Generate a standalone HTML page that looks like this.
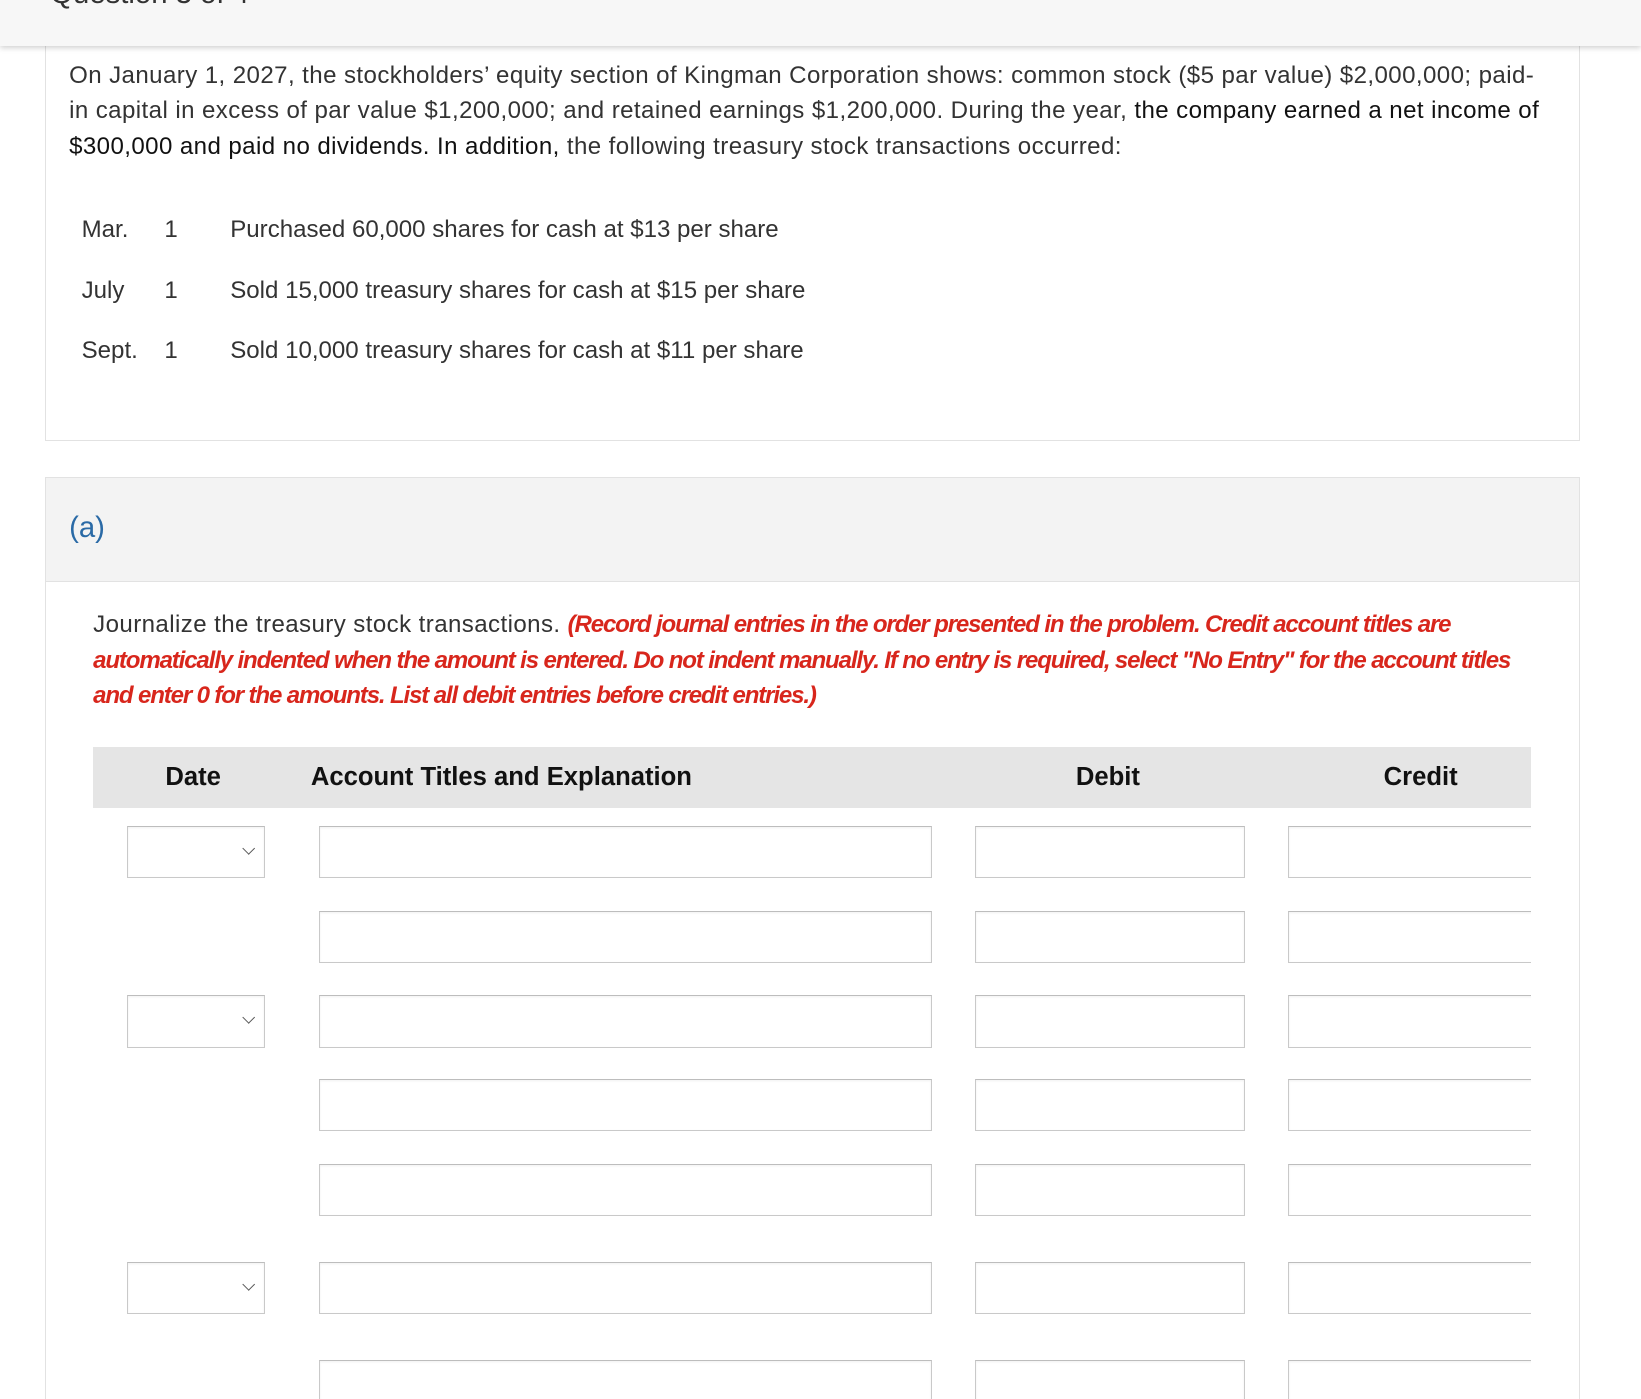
<!DOCTYPE html>
<html><head><meta charset="utf-8"><style>
html,body{margin:0;padding:0;background:#fff;overflow:hidden}
body{width:1641px;height:1399px}
#w{zoom:1.0466;position:relative;width:1568px;height:1337px;font-family:"Liberation Sans",sans-serif;color:#333}
.abs{position:absolute;white-space:nowrap}
.top{position:absolute;left:0;top:0;width:1568px;height:44px;background:#f7f7f7;box-shadow:0 2px 5px rgba(0,0,0,.18);overflow:hidden;z-index:2}
.card1{position:absolute;left:43px;top:44px;width:1465px;height:376px;border:1px solid #e2e2e2;border-top:none;background:#fff}
.card2{position:absolute;left:43px;top:456px;width:1465px;height:900px;border:1px solid #e2e2e2;background:#fff}
.band{position:absolute;left:0;top:0;width:1465px;height:98px;background:#f3f3f3;border-bottom:1px solid #e2e2e2}
.p{font-size:23px;line-height:34px;color:#333}
.sp{letter-spacing:0.4px}
.red{color:#d8261c;font-style:italic;font-weight:bold;letter-spacing:-1.1px}
.th{position:absolute;left:89px;top:714px;width:1374px;height:58px;background:#e5e5e5}
.th span{position:absolute;top:15px;font-size:24.5px;font-weight:bold;color:#111}
.in{position:absolute;height:48px;border:1px solid #c9c9c9;border-top-color:#bdbdbd;background:#fff;box-shadow:inset 0 1px 2px rgba(0,0,0,.06)}
.sel::after{content:"";position:absolute;right:10px;top:16px;width:8px;height:8px;border-right:1.5px solid #555;border-bottom:1.5px solid #555;transform:rotate(45deg)}
</style></head><body><div id="w">
<div class="top"><div class="abs" style="left:48px;top:-22px;font-size:28px;color:#333">Question 3 of 4</div></div>
<div class="card1"></div>
<div class="abs p sp" style="left:66px;top:55px;">On January 1, 2027, the stockholders’ equity section of Kingman Corporation shows: common stock ($5 par value) $2,000,000; paid-<br>in capital in excess of par value $1,200,000; and retained earnings $1,200,000. During the year, <span style="color:#111">the company earned a net income of</span><br><span style="color:#111">$300,000 and paid no dividends. In addition,</span> the following treasury stock transactions occurred:</div>
<div class="abs p" style="left:78px;top:203px">Mar.</div><div class="abs p" style="left:157px;top:203px">1</div><div class="abs p" style="left:220px;top:203px">Purchased 60,000 shares for cash at $13 per share</div>
<div class="abs p" style="left:78px;top:261px">July</div><div class="abs p" style="left:157px;top:261px">1</div><div class="abs p" style="left:220px;top:261px">Sold 15,000 treasury shares for cash at $15 per share</div>
<div class="abs p" style="left:78px;top:318px">Sept.</div><div class="abs p" style="left:157px;top:318px">1</div><div class="abs p" style="left:220px;top:318px">Sold 10,000 treasury shares for cash at $11 per share</div>
<div class="card2"><div class="band"></div></div>
<div class="abs" style="left:66px;top:488px;font-size:28px;color:#2a6aa6">(a)</div>
<div class="abs p" style="left:89px;top:580px"><span class="sp">Journalize the treasury stock transactions. </span><span class="red">(Record journal entries in the order presented in the problem. Credit account titles are</span><br><span class="red">automatically indented when the amount is entered. Do not indent manually. If no entry is required, select "No Entry" for the account titles</span><br><span class="red">and enter 0 for the amounts. List all debit entries before credit entries.)</span></div>
<div class="th"><span style="left:69px">Date</span><span style="left:208px">Account Titles and Explanation</span><span style="left:939px">Debit</span><span style="left:1233px">Credit</span></div>

<div class="in sel" style="left:121px;top:789px;width:130px"></div>
<div class="in sel" style="left:121px;top:951px;width:130px"></div>
<div class="in sel" style="left:121px;top:1206px;width:130px"></div>

<div class="in" style="left:305px;top:789px;width:584px"></div><div class="in" style="left:932px;top:789px;width:256px"></div><div class="in" style="left:1231px;top:789px;width:240px"></div>
<div class="in" style="left:305px;top:870px;width:584px"></div><div class="in" style="left:932px;top:870px;width:256px"></div><div class="in" style="left:1231px;top:870px;width:240px"></div>
<div class="in" style="left:305px;top:951px;width:584px"></div><div class="in" style="left:932px;top:951px;width:256px"></div><div class="in" style="left:1231px;top:951px;width:240px"></div>
<div class="in" style="left:305px;top:1031px;width:584px"></div><div class="in" style="left:932px;top:1031px;width:256px"></div><div class="in" style="left:1231px;top:1031px;width:240px"></div>
<div class="in" style="left:305px;top:1112px;width:584px"></div><div class="in" style="left:932px;top:1112px;width:256px"></div><div class="in" style="left:1231px;top:1112px;width:240px"></div>
<div class="in" style="left:305px;top:1206px;width:584px"></div><div class="in" style="left:932px;top:1206px;width:256px"></div><div class="in" style="left:1231px;top:1206px;width:240px"></div>
<div class="in" style="left:305px;top:1299px;width:584px"></div><div class="in" style="left:932px;top:1299px;width:256px"></div><div class="in" style="left:1231px;top:1299px;width:240px"></div>
<div style="position:absolute;left:1463px;top:780px;width:45px;height:560px;background:#fff"></div>
</div></body></html>
